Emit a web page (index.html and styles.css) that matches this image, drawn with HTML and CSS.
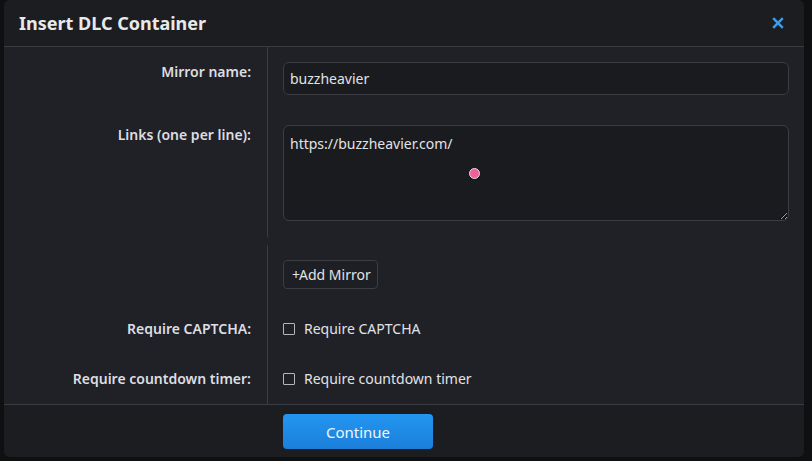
FILE: index.html
```html
<!DOCTYPE html>
<html>
<head>
<meta charset="utf-8">
<link rel="stylesheet" href="styles.css">
</head>
<body>
<div class="dialog">
  <header class="dlg-head">
    <h1 class="dlg-title">Insert DLC Container</h1>
    <button class="close" aria-label="Close">
      <svg width="12" height="12" viewBox="0 0 12 12"><path d="M1.2 1.2 L10.8 10.8 M10.8 1.2 L1.2 10.8" stroke="#3a9cec" stroke-width="2.5" fill="none"/></svg>
    </button>
  </header>
  <div class="dlg-body">
    <div class="group">
      <label class="lbl">Mirror name:</label>
      <div class="fld"><input class="txt" type="text" value="buzzheavier"></div>
      <label class="lbl lbl-last">Links (one per line):</label>
      <div class="fld fld-last"><textarea class="area">https://buzzheavier.com/</textarea></div>
    </div>
    <div class="group group2">
      <div class="lbl"></div>
      <div class="fld"><button class="add"><span class="plus">+</span>Add Mirror</button></div>
      <div class="lbl">Require CAPTCHA:</div>
      <div class="fld chk-row"><span class="chk"></span><span>Require CAPTCHA</span></div>
      <div class="lbl">Require countdown timer:</div>
      <div class="fld chk-row"><span class="chk"></span><span>Require countdown timer</span></div>
    </div>
  </div>
  <footer class="dlg-foot">
    <div></div>
    <div class="foot-fld"><button class="primary">Continue</button></div>
  </footer>
  <span class="cursor-dot"></span>
</div>
</body>
</html>
```
FILE: styles.css
```css
* { box-sizing: border-box; }
html, body { margin: 0; padding: 0; }
body {
  background: #0f1012;
  font-family: "Noto Sans", "Open Sans", sans-serif;
  font-size: 14px;
  color: #e2e3e6;
  width: 812px;
  height: 461px;
  overflow: hidden;
}
.dialog {
  position: relative;
  margin-left: 4px;
  width: 800px;
  height: 457px;
  background: #202126;
  border-radius: 6px;
  overflow: hidden;
  display: flex;
  flex-direction: column;
}
.dlg-head {
  height: 47px;
  flex: none;
  background: #1c1d21;
  border-bottom: 1px solid #3b3c41;
  display: flex;
  align-items: center;
  justify-content: space-between;
  padding: 0 20px 0 15px;
}
.dlg-title {
  margin: 0;
  font-size: 18px;
  font-weight: 700;
  line-height: 45px;
  color: #e9e9ea;
}
.close {
  background: none;
  border: 0;
  padding: 0;
  width: 12px;
  height: 12px;
  display: block;
}
.close svg { display: block; }
.dlg-body { flex: none; }
.group {
  display: grid;
  grid-template-columns: 264px 1fr;
}
.group2 { margin-top: 8px; }
.lbl {
  border-right: 1px solid #3b3c41;
  text-align: right;
  padding: 15px 16px 15px 0;
  line-height: 20px;
  font-weight: 600;
  color: #dcdee2;
}
.fld {
  padding: 15px;
  line-height: 20px;
}
.fld-last, .lbl-last { padding-bottom: 16px; }
.txt {
  display: block;
  width: 100%;
  height: 33px;
  background: #1a1b1f;
  border: 1px solid #3c3d43;
  border-radius: 6px;
  color: #e2e3e6;
  font: 14px "Noto Sans", sans-serif;
  padding: 0 6px;
  outline: none;
}
.area {
  display: block;
  width: 100%;
  height: 96px;
  background: #1a1b1f;
  border: 1px solid #3c3d43;
  border-radius: 6px;
  color: #e2e3e6;
  font: 14px/20px "Noto Sans", sans-serif;
  padding: 8px 6px;
  resize: vertical;
  outline: none;
  color-scheme: dark;
}
.add {
  display: block;
  height: 29px;
  padding: 0 6px 0 8px;
  background: #1e1f24;
  border: 1px solid #3c3d43;
  border-radius: 4px;
  color: #e2e3e6;
  font: 14px "Noto Sans", sans-serif;
}
.plus {
  letter-spacing: -1px;
}
.chk-row {
  display: flex;
  align-items: center;
  gap: 9px;
}
.chk {
  width: 12px;
  height: 12px;
  border: 1px solid #b5b6ba;
  border-radius: 1px;
  flex: none;
}
.dlg-foot {
  flex: 1;
  background: #1c1d21;
  border-top: 1px solid #3b3c41;
  display: grid;
  grid-template-columns: 264px 1fr;
}
.foot-fld { padding: 9px 15px 0 15px; }
.primary {
  display: block;
  width: 150px;
  height: 35px;
  border: 0;
  border-radius: 4px;
  background: linear-gradient(#2396f1, #1b7fda);
  color: #f2f6fb;
  font: 15px "Noto Sans", sans-serif;
}
.cursor-dot {
  position: absolute;
  left: 465px;
  top: 168px;
  width: 11px;
  height: 11px;
  border-radius: 50%;
  background: #f0609a;
  border: 1px solid #e8d8e0;
}
```
